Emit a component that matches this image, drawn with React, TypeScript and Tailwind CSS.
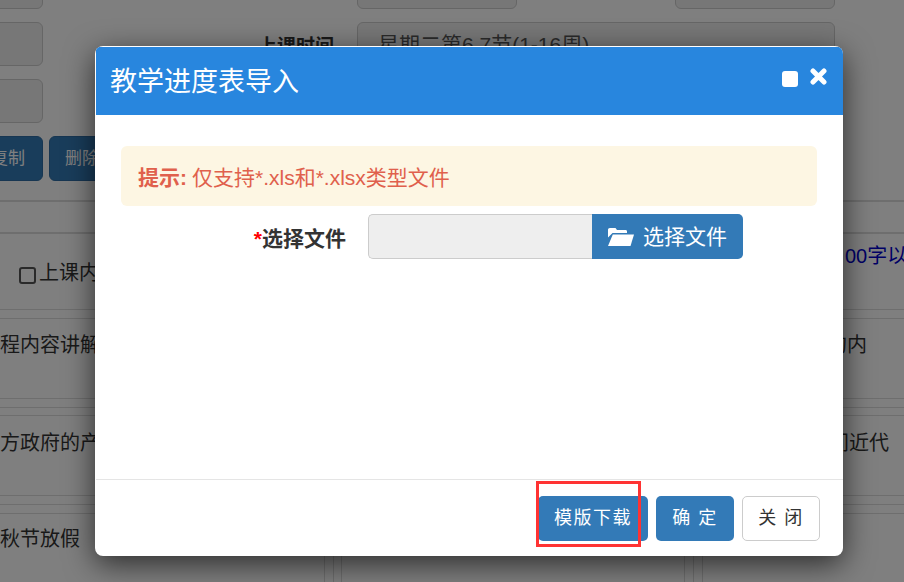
import type { ReactNode } from 'react'

const rows = [
  { left: '程内容讲解', right: '的内', textTop: 'pt-[11px]', rightPad: 'pl-[124px]', gaps: ['h-[9px]'] },
  { left: '方政府的产', right: '间近代', textTop: 'pt-[12px]', rightPad: 'pl-[126px]', gaps: ['h-[9px]', 'h-[8px]'] },
  { left: '秋节放假', right: '', textTop: 'pt-[10px]', rightPad: 'pl-[126px]', gaps: ['h-[9px]', 'h-[9px]'] },
]

function BgInput({ className, children }: { className: string; children?: ReactNode }) {
  return (
    <div className={`h-[44px] shrink-0 overflow-hidden rounded-md border border-[#ccc] bg-[#eee] ${className}`}>
      {children}
    </div>
  )
}

function Page() {
  return (
    <div className="-mt-[35px] text-[#333]">
      <div className="flex flex-col gap-[13px]">
        <div className="flex h-[44px] items-end">
          <BgInput className="-ml-[10px] w-[53px]" />
          <div className="mb-[4px] w-[314px] pr-[23px] text-right text-[19px] font-bold leading-[26px]">授课教师姓名</div>
          <BgInput className="w-[160px]" />
          <div className="mb-[4px] w-[158px] pr-[35px] text-right text-[19px] font-bold leading-[26px]">学分</div>
          <BgInput className="w-[160px]" />
        </div>
        <div className="flex h-[44px]">
          <BgInput className="-ml-[10px] w-[53px]" />
          <div className="w-[314px] pr-[23px] pt-[11px] text-right text-[19px] font-bold">上课时间</div>
          <BgInput className="w-[478px] px-[20px] py-[6px] text-[21px] text-[#555]">星期二第6,7节(1-16周)</BgInput>
        </div>
        <BgInput className="-ml-[10px] w-[53px]" />
        <div className="flex h-[45px] gap-[6px] text-[17px] text-white">
          <div className="-ml-[10px] flex w-[53px] items-center justify-end rounded-md border border-[#2e6da4] bg-[#337ab7] pr-[17px] whitespace-nowrap">
            复制
          </div>
          <div className="flex w-[100px] items-center rounded-md border border-[#2e6da4] bg-[#337ab7] pl-[15px]">删除</div>
        </div>
      </div>

      <div className="mt-[19px] h-[32px] border-t-2 border-[#ddd]" />

      <div className="flex h-[77px] border-t-2 border-[#ddd] text-[20px]">
        <div className="flex w-[703px] shrink-0 items-start pl-[19px] pt-[24px]">
          <span className="mt-[9px] h-[17px] w-[17px] shrink-0 rounded-[3px] border-2 border-[#555] bg-white" />
          <span className="ml-[3px] whitespace-nowrap">上课内容</span>
        </div>
        <div className="whitespace-nowrap pl-[142px] pt-[7px] text-[#0000cc]">00字以内</div>
      </div>

      {rows.map((row) => (
        <div key={row.left}>
          {row.gaps.map((gap, i) => (
            <div key={i} className={`${gap} border-t border-[#ddd]`} />
          ))}
          <div className="flex h-[80px] border-t border-[#ddd] text-[20px]">
            <div className={`w-[325px] shrink-0 border-r border-[#ddd] whitespace-nowrap ${row.textTop}`}>{row.left}</div>
            <div className="w-[9px] shrink-0 border-r border-[#ddd]" />
            <div className="w-[8px] shrink-0 border-r border-[#ddd]" />
            <div className="w-[343px] shrink-0 border-r border-[#ddd]" />
            <div className="w-[9px] shrink-0 border-r border-[#ddd]" />
            <div className="w-[9px] shrink-0 border-r border-[#ddd]" />
            <div className={`min-w-0 flex-1 whitespace-nowrap ${row.textTop} ${row.rightPad}`}>{row.right}</div>
          </div>
        </div>
      ))}
    </div>
  )
}

function Modal() {
  return (
    <div className="absolute left-[95px] top-[46px] flex h-[510px] w-[748px] flex-col overflow-hidden rounded-[8px] bg-white pl-[1px] shadow-[0_8px_30px_rgba(0,0,0,0.65)]">
      <div className="mt-[1px] flex h-[68px] shrink-0 items-center justify-between bg-[#2886de] pl-[14px] pr-[16px] text-white">
        <h4 className="pt-[2px] text-[27px] leading-none">教学进度表导入</h4>
        <div className="flex items-center gap-[12px]">
          <span className="-mt-[4px] h-[16px] w-[16px] rounded-[3px] bg-white" />
          <svg viewBox="0 0 17 17" className="-mt-[9px] h-[17px] w-[17px]" stroke="#fff" strokeWidth="5" strokeLinecap="round">
            <path d="M3 3 14 14M14 3 3 14" />
          </svg>
        </div>
      </div>

      <div className="flex-1 pl-[25px] pr-[26px] pt-[31px]">
        <div className="flex h-[60px] items-center rounded-md bg-[#fdf6e3] px-[17px] pt-[4px] text-[21px] text-[#e0604c]">
          <strong>提示:</strong>
          <span className="ml-[5px]">仅支持*.xls和*.xlsx类型文件</span>
        </div>
        <div className="mt-[8px] flex h-[45px] items-center">
          <label className="w-[225px] pt-[4px] text-right text-[21px] font-bold text-[#333]">
            <span className="text-[#f00]">*</span>选择文件
          </label>
          <div className="ml-[22px] h-full w-[224px] rounded-l-[5px] border border-r-0 border-[#ccc] bg-[#eee]" />
          <button className="flex h-full w-[151px] items-center justify-center gap-[9px] rounded-r-[5px] bg-[#337ab7] text-[21px] text-white">
            <svg viewBox="0 0 26 18" className="h-[18px] w-[26px]" fill="#fff">
              <path d="M0 6V1.800C0 .8.800 0 1.800 0h5.700L9 2h8.500c1 0 1.500.6 1.500 1.500V5H4.500L0 9.500Z" />
              <path d="M4.800 6.500H26L22.500 18H0Z" />
            </svg>
            选择文件
          </button>
        </div>
      </div>

      <div className="flex h-[77px] shrink-0 items-start justify-end gap-[8px] border-t border-[#e5e5e5] pr-[23px] pt-[16px] text-[18px] tracking-[1.500px]">
        <button className="h-[45px] w-[110px] rounded-[5px] bg-[#337ab7] text-white">模版下载</button>
        <button className="h-[45px] w-[78px] rounded-[5px] bg-[#337ab7] text-white">确 定</button>
        <button className="h-[45px] w-[78px] rounded-[5px] border border-[#ccc] bg-white text-[#333]">关 闭</button>
      </div>
    </div>
  )
}

export default function App() {
  return (
    <div
      className="relative h-[582px] w-[904px] overflow-hidden bg-white"
      style={{ fontFamily: '"Liberation Sans", "Noto Sans CJK SC", sans-serif' }}
    >
      <Page />
      <div className="absolute inset-0 bg-black/50" />
      <Modal />
      <div className="absolute left-[536px] top-[481px] h-[66px] w-[105px] border-[3px] border-[#ff3333]" />
    </div>
  )
}
